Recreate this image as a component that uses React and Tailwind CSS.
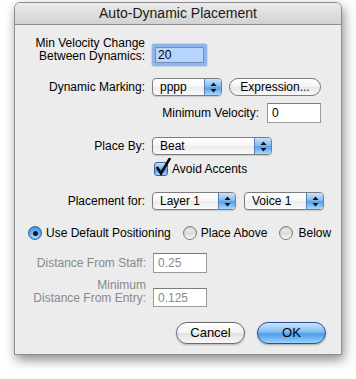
import React from "react";

const font = { fontFamily: '"Liberation Sans", Arial, sans-serif' };

function Arrows() {
  return (
    <svg width="7" height="11" viewBox="0 0 7 11">
      <path d="M3.5 0.5 L6.5 4 L0.5 4 Z" fill="#111" />
      <path d="M0.5 7 L6.5 7 L3.5 10.5 Z" fill="#111" />
    </svg>
  );
}

function Popup({ label, w }) {
  return (
    <div
      className={`flex h-[18px] items-stretch overflow-hidden rounded-[4px] border border-[#7d7d7d] bg-[linear-gradient(to_bottom,#ffffff_0%,#f6f6f6_50%,#ececec_51%,#fafafa_100%)] shadow-[0_1px_1px_rgba(0,0,0,0.15)] ${w}`}
    >
      <span className="flex flex-1 items-center pl-[7px] text-[12px] text-black">{label}</span>
      <div className="flex w-[17px] items-center justify-center border-l border-[#5a7fb8] bg-[linear-gradient(to_bottom,#c9e2fb_0%,#86bdf3_45%,#5a9fe6_55%,#a9d8ff_100%)]">
        <Arrows />
      </div>
    </div>
  );
}

function Field({ value, disabled, h = "h-[20px]" }) {
  return (
    <div
      className={`flex w-[54px] items-center border border-[#9a9a9a] border-t-[#7a7a7a] bg-white pl-[4px] text-[12px] ${h} ${
        disabled ? "text-[#8a8a8a]" : "text-black"
      }`}
    >
      {value}
    </div>
  );
}

function Radio({ on }) {
  if (on) {
    return (
      <div className="flex h-[14px] w-[14px] items-center justify-center rounded-full border border-[#3a5f9c] bg-[radial-gradient(circle_at_50%_70%,#bfe3ff_0%,#5fa7ee_55%,#2f72c8_100%)]">
        <div className="h-[5px] w-[5px] rounded-full bg-[#0d1a33]" />
      </div>
    );
  }
  return (
    <div className="h-[14px] w-[14px] rounded-full border border-[#7c7c7c] bg-[linear-gradient(to_bottom,#f2f2f2_0%,#dcdcdc_55%,#f8f8f8_100%)] shadow-[inset_0_1px_1px_rgba(0,0,0,0.2)]" />
  );
}

export default function App() {
  return (
    <div className="h-[379px] w-[356px] bg-white pl-[14px] pt-[2px]" style={font}>
      <div className="flex h-[353px] w-[328px] flex-col overflow-hidden rounded-t-[6px] border border-[#8e8e8e] bg-[#ececec] shadow-[2px_5px_12px_rgba(0,0,0,0.45)]">
        {/* title bar */}
        <div className="flex h-[22px] shrink-0 items-center justify-center border-b border-[#8f8f8f] bg-[linear-gradient(to_bottom,#ececec_0%,#dedede_50%,#d2d2d2_100%)] text-[14px] text-[#1a1a1a]">
          Auto-Dynamic Placement
        </div>

        <div className="flex flex-col pt-[12px] text-[12px] text-black">
          {/* min velocity change */}
          <div className="flex items-end">
            <div className="mb-[3px] w-[130px] text-right leading-[13px]">
              Min Velocity Change
              <br />
              Between Dynamics:
            </div>
            <div className="ml-[7px] rounded-[2px] bg-[#8fb5ea] p-[3px] shadow-[0_0_2px_#6f9be0]">
              <div className="flex h-[16px] w-[49px] items-center border border-[#6f8fc0] bg-[#b6d5fd] pl-[2px] text-[12px]">
                20
              </div>
            </div>
          </div>

          {/* dynamic marking */}
          <div className="mt-[12px] flex h-[18px] items-center">
            <div className="w-[130px] text-right">Dynamic Marking:</div>
            <div className="ml-[7px]">
              <Popup label="pppp" w="w-[70px]" />
            </div>
            <div className="ml-[7px] flex h-[18px] w-[92px] items-center justify-center rounded-full border border-[#7a7a7a] bg-[linear-gradient(to_bottom,#ffffff_0%,#f3f3f3_50%,#e6e6e6_51%,#fafafa_100%)] text-[12px]">
              Expression...
            </div>
          </div>

          {/* minimum velocity */}
          <div className="mt-[7px] flex items-center justify-end gap-[8px] pr-[20px]">
            <span>Minimum Velocity:</span>
            <Field value="0" />
          </div>

          {/* place by */}
          <div className="mt-[14px] flex h-[18px] items-center">
            <div className="w-[130px] text-right">Place By:</div>
            <div className="ml-[7px]">
              <Popup label="Beat" w="w-[120px]" />
            </div>
          </div>

          {/* avoid accents */}
          <div className="mt-[7px] flex h-[14px] items-center pl-[139px]">
            <div className="relative h-[14px] w-[14px] rounded-[3px] border border-[#3a5f9c] bg-[linear-gradient(to_bottom,#c4e1fc_0%,#6eaef0_50%,#4f98e6_55%,#a5d6ff_100%)]">
              <svg className="absolute -top-[5px] left-[1px]" width="15" height="18" viewBox="0 0 15 18">
                <path d="M1.5 10 L5 15.5 L13.5 1" fill="none" stroke="#0a0a0a" strokeWidth="2.6" strokeLinecap="square" />
              </svg>
            </div>
            <span className="ml-[4px]">Avoid Accents</span>
          </div>

          {/* placement for */}
          <div className="mt-[16px] flex h-[18px] items-center">
            <div className="w-[130px] text-right">Placement for:</div>
            <div className="ml-[7px]">
              <Popup label="Layer 1" w="w-[84px]" />
            </div>
            <div className="ml-[8px]">
              <Popup label="Voice 1" w="w-[80px]" />
            </div>
          </div>

          {/* radios */}
          <div className="mt-[16px] flex h-[14px] items-center pl-[13px]">
            <Radio on />
            <span className="ml-[4px]">Use Default Positioning</span>
            <div className="ml-[12px]">
              <Radio />
            </div>
            <span className="ml-[4px]">Place Above</span>
            <div className="ml-[12px]">
              <Radio />
            </div>
            <span className="ml-[5px]">Below</span>
          </div>

          {/* distance from staff */}
          <div className="mt-[13px] flex items-center">
            <div className="w-[131px] text-right text-[#8a8a8a]">Distance From Staff:</div>
            <div className="ml-[7px]">
              <Field value="0.25" disabled />
            </div>
          </div>

          {/* minimum distance from entry */}
          <div className="mt-[6px] flex items-end">
            <div className="mb-[2px] w-[131px] text-right leading-[13px] text-[#8a8a8a]">
              Minimum
              <br />
              Distance From Entry:
            </div>
            <div className="ml-[7px]">
              <Field value="0.125" disabled h="h-[19px]" />
            </div>
          </div>

          {/* buttons */}
          <div className="mt-[15px] flex items-center justify-end gap-[12px] pr-[15px]">
            <div className="flex h-[22px] w-[69px] items-center justify-center rounded-full border border-[#6a6a6a] bg-[linear-gradient(to_bottom,#ffffff_0%,#f2f2f2_50%,#e2e2e2_52%,#f8f8f8_100%)] text-[13px] shadow-[0_1px_2px_rgba(0,0,0,0.25)]">
              Cancel
            </div>
            <div className="flex h-[22px] w-[69px] items-center justify-center rounded-full border border-[#2d4f96] bg-[linear-gradient(to_bottom,#cbe6fd_0%,#7fbdf3_45%,#4f9ce8_55%,#97d3ff_100%)] text-[13px] shadow-[0_1px_2px_rgba(0,0,0,0.3)]">
              OK
            </div>
          </div>
        </div>
      </div>
    </div>
  );
}
